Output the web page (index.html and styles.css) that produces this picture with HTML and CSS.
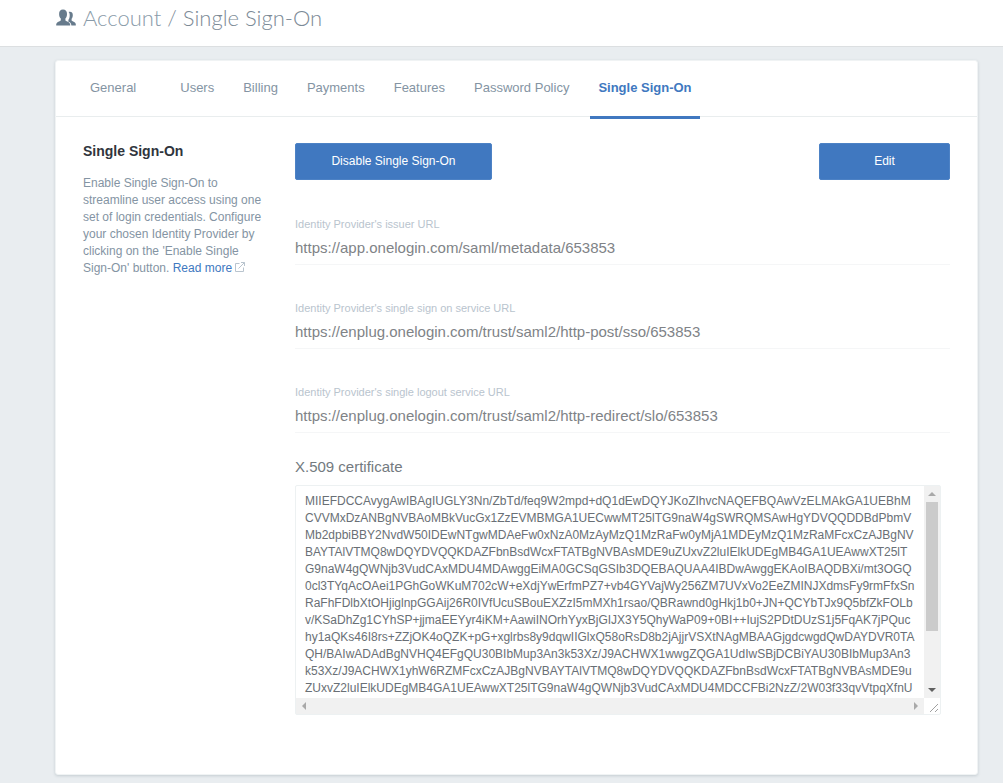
FILE: index.html
```html
<!DOCTYPE html>
<html lang="en">
<head>
  <meta charset="utf-8">
  <meta name="viewport" content="width=device-width, initial-scale=1">
  <title>Account / Single Sign-On</title>
  <link rel="stylesheet" href="styles.css">
</head>
<body>
  <header class="page-header">
    <svg class="people-icon" viewBox="0 0 20 18" aria-hidden="true">
      <path d="M12.600 3c2.200-.8 4.200.3 4.200 3 0 1.900-.5 3-1.200 3.800v1.700c.2.8 4.200 1.500 4.200 3.700V16.500h-4.400c-.1-2.500-1.700-3.400-3.200-4l.4-2c.8-1 1.200-2.600 1.100-4.500 0-1.200-.4-2.300-1.100-3z"/>
      <path d="M7 .6c2.600 0 4 1.700 4 4.300 0 2-.6 3.600-1.600 4.500v1.800c.3 1.100 4.800 1.700 4.800 4.300v1H.2v-1c0-2.600 4.200-3.200 4.600-4.300V9.400C3.700 8.500 3.100 6.900 3.100 4.900 3.100 2.300 4.400.6 7 .6z"/>
    </svg>
    <h1 class="page-title"><a href="#account">Account</a> / Single Sign-On</h1>
  </header>

  <main class="card">
    <nav class="tabs" aria-label="Account settings">
      <a class="tab tab-first" href="#general">General</a>
      <a class="tab" href="#users">Users</a>
      <a class="tab" href="#billing">Billing</a>
      <a class="tab" href="#payments">Payments</a>
      <a class="tab" href="#features">Features</a>
      <a class="tab" href="#password-policy">Password Policy</a>
      <a class="tab tab-active" href="#sso" aria-current="page">Single Sign-On</a>
    </nav>

    <div class="content">
      <aside class="intro">
        <h2 class="intro-title">Single Sign-On</h2>
        <p class="intro-text">Enable Single Sign-On to streamline user access using one set of login credentials. Configure your chosen Identity Provider by clicking on the 'Enable Single Sign-On' button. <a class="read-more" href="#more">Read more</a> <svg class="external-icon" viewBox="0 0 10 10" aria-hidden="true"><path d="M4.500 1.500H.5v8h8v-4M3.500 6.500l6-6M6 .5h3.500V4"/></svg></p>
      </aside>

      <section class="settings">
        <div class="actions">
          <button class="button button-wide" type="button">Disable Single Sign-On</button>
          <button class="button" type="button">Edit</button>
        </div>

        <div class="field">
          <label class="field-label" for="issuer">Identity Provider's issuer URL</label>
          <input class="field-input" id="issuer" type="text" readonly value="https://app.onelogin.com/saml/metadata/653853">
        </div>
        <div class="field">
          <label class="field-label" for="service">Identity Provider's single sign on service URL</label>
          <input class="field-input" id="service" type="text" readonly value="https://enplug.onelogin.com/trust/saml2/http-post/sso/653853">
        </div>
        <div class="field">
          <label class="field-label" for="logout">Identity Provider's single logout service URL</label>
          <input class="field-input" id="logout" type="text" readonly value="https://enplug.onelogin.com/trust/saml2/http-redirect/slo/653853">
        </div>

        <label class="cert-label" for="cert">X.509 certificate</label>
        <div class="cert-box">
          <textarea class="cert-text" id="cert" readonly wrap="off" spellcheck="false">MIIEFDCCAvygAwIBAgIUGLY3Nn/ZbTd/feq9W2mpd+dQ1dEwDQYJKoZIhvcNAQEFBQAwVzELMAkGA1UEBhM
CVVMxDzANBgNVBAoMBkVucGx1ZzEVMBMGA1UECwwMT25lTG9naW4gSWRQMSAwHgYDVQQDDBdPbmV
Mb2dpbiBBY2NvdW50IDEwNTgwMDAeFw0xNzA0MzAyMzQ1MzRaFw0yMjA1MDEyMzQ1MzRaMFcxCzAJBgNV
BAYTAlVTMQ8wDQYDVQQKDAZFbnBsdWcxFTATBgNVBAsMDE9uZUxvZ2luIElkUDEgMB4GA1UEAwwXT25lT
G9naW4gQWNjb3VudCAxMDU4MDAwggEiMA0GCSqGSIb3DQEBAQUAA4IBDwAwggEKAoIBAQDBXi/mt3OGQ
0cl3TYqAcOAei1PGhGoWKuM702cW+eXdjYwErfmPZ7+vb4GYVajWy256ZM7UVxVo2EeZMINJXdmsFy9rmFfxSn
RaFhFDlbXtOHjiglnpGGAij26R0IVfUcuSBouEXZzI5mMXh1rsao/QBRawnd0gHkj1b0+JN+QCYbTJx9Q5bfZkFOLb
v/KSaDhZg1CYhSP+jjmaEEYyr4iKM+AawiINOrhYyxBjGIJX3Y5QhyWaP09+0BI++IujS2PDtDUzS1j5FqAK7jPQuc
hy1aQKs46I8rs+ZZjOK4oQZK+pG+xglrbs8y9dqwIIGlxQ58oRsD8b2jAjjrVSXtNAgMBAAGjgdcwgdQwDAYDVR0TA
QH/BAIwADAdBgNVHQ4EFgQU30BIbMup3An3k53Xz/J9ACHWX1wwgZQGA1UdIwSBjDCBiYAU30BIbMup3An3
k53Xz/J9ACHWX1yhW6RZMFcxCzAJBgNVBAYTAlVTMQ8wDQYDVQQKDAZFbnBsdWcxFTATBgNVBAsMDE9u
ZUxvZ2luIElkUDEgMB4GA1UEAwwXT25lTG9naW4gQWNjb3VudCAxMDU4MDCCFBi2NzZ/2W03f33qvVtpqXfnU
NXRMA4GA1UdDwEB/wQEAwIHgDANBgkqhkiG9w0BAQUFAAOCAQEAoHUm27S0WqUvdZaUYMilhzHoVWI0W</textarea>
          <div class="scroll-y" aria-hidden="true">
            <svg class="arrow arrow-dim" viewBox="0 0 8 8"><path d="M0 6l4-4 4 4z"/></svg>
            <span class="thumb"></span>
            <svg class="arrow arrow-dark" viewBox="0 0 8 8"><path d="M0 2l4 4 4-4z"/></svg>
          </div>
          <div class="scroll-x" aria-hidden="true">
            <svg class="arrow arrow-dim" viewBox="0 0 8 8"><path d="M6 0L2 4l4 4z"/></svg>
            <svg class="arrow arrow-dim" viewBox="0 0 8 8"><path d="M2 0l4 4-4 4z"/></svg>
          </div>
          <svg class="grip" viewBox="0 0 16 16" aria-hidden="true"><path d="M6 14L14 6M11 14l3-3"/></svg>
        </div>
      </section>
    </div>
  </main>
</body>
</html>
```
FILE: styles.css
```css
* {
  box-sizing: border-box;
}

body {
  margin: 0;
  background: #e9edf0;
  color: #8494a3;
  font: 12px/17px "Liberation Sans", Arial, sans-serif;
}

a {
  color: inherit;
  text-decoration: none;
}

.page-header {
  display: flex;
  align-items: center;
  gap: 7px;
  padding: 3px 56px 13px;
  background: #fff;
  border-bottom: 1px solid #dcdfe1;
}

.people-icon {
  width: 20px;
  height: 18px;
  fill: #677b8c;
}

.page-title {
  margin: 0;
  color: #7c8a96;
  font: 300 22px/30px Lato, "Open Sans", sans-serif;
}

.page-title a {
  color: #8a9ba9;
}

.card {
  margin: 13px 25px 7px 55px;
  padding-bottom: 59px;
  background: #fff;
  border: 1px solid #f0f3f4;
  border-radius: 3px;
  box-shadow: 0 1px 3px rgba(60, 80, 90, 0.2);
}

.tabs {
  display: flex;
  gap: 13px;
  height: 56px;
  padding-left: 26px;
  border-bottom: 1px solid #e9edee;
}

.tab {
  height: 58px;
  padding: 0 8px;
  font-size: 13px;
  line-height: 54px;
}

.tab-first {
  margin-right: 15px;
}

.tab-active {
  border-bottom: 3px solid #4078c0;
  color: #4078c0;
  font-weight: bold;
}

.content {
  display: grid;
  grid-template-columns: 180px minmax(0, 1fr);
  gap: 32px;
  padding: 26px 27px 0;
}

.intro-title {
  margin: 0 0 15px;
  color: #30353d;
  font-size: 14px;
  line-height: 17px;
}

.intro-text {
  margin: 0;
}

.read-more {
  color: #4078c0;
}

.external-icon {
  width: 10px;
  height: 10px;
  fill: none;
  stroke: #b9c4ce;
}

.actions {
  display: flex;
  justify-content: space-between;
  margin-bottom: 36px;
}

.button {
  width: 131px;
  height: 37px;
  border: 1px solid #4d82c5;
  border-radius: 2px;
  background: #4078c0;
  color: #fff;
  font: inherit;
}

.button-wide {
  width: 197px;
}

.field {
  display: flex;
  flex-direction: column;
  margin-bottom: 35px;
}

.field-label {
  color: #b9c4ce;
  font-size: 11px;
  line-height: 16px;
}

.field-input {
  width: 100%;
  height: 33px;
  padding: 0 0 2px;
  border: 0;
  border-bottom: 1px solid #f5f6f7;
  background: none;
  color: #808387;
  font: 15px/20px "Liberation Sans", Arial, sans-serif;
}

.cert-label {
  display: block;
  margin: -11px 0 8px;
  color: #737a80;
  font-size: 15px;
  line-height: 20px;
}

.cert-box {
  display: grid;
  grid-template-columns: minmax(0, 1fr) 16px;
  grid-template-rows: 212px 16px;
  margin-right: 9px;
  border: 1px solid #edf1f2;
  border-radius: 2px;
}

.cert-text {
  width: 100%;
  height: 100%;
  padding: 7px 9px 0;
  border: 0;
  background: none;
  color: #696f75;
  font: 12px/17px "Liberation Sans", Arial, sans-serif;
  overflow: hidden;
  resize: none;
  white-space: pre;
}

.scroll-y,
.scroll-x {
  display: flex;
  align-items: center;
  justify-content: space-between;
  background: #f1f1f1;
}

.scroll-y {
  flex-direction: column;
  padding: 4px 0;
}

.scroll-x {
  padding: 0 4px;
}

.thumb {
  width: 12px;
  height: 129px;
  margin: 4px 0 auto;
  background: #cbcbcb;
}

.arrow {
  width: 8px;
  height: 8px;
}

.arrow-dim {
  fill: #a9a9a9;
}

.arrow-dark {
  fill: #606060;
}

.grip {
  width: 16px;
  height: 16px;
  fill: none;
  stroke: #a0a0a0;
}
```
